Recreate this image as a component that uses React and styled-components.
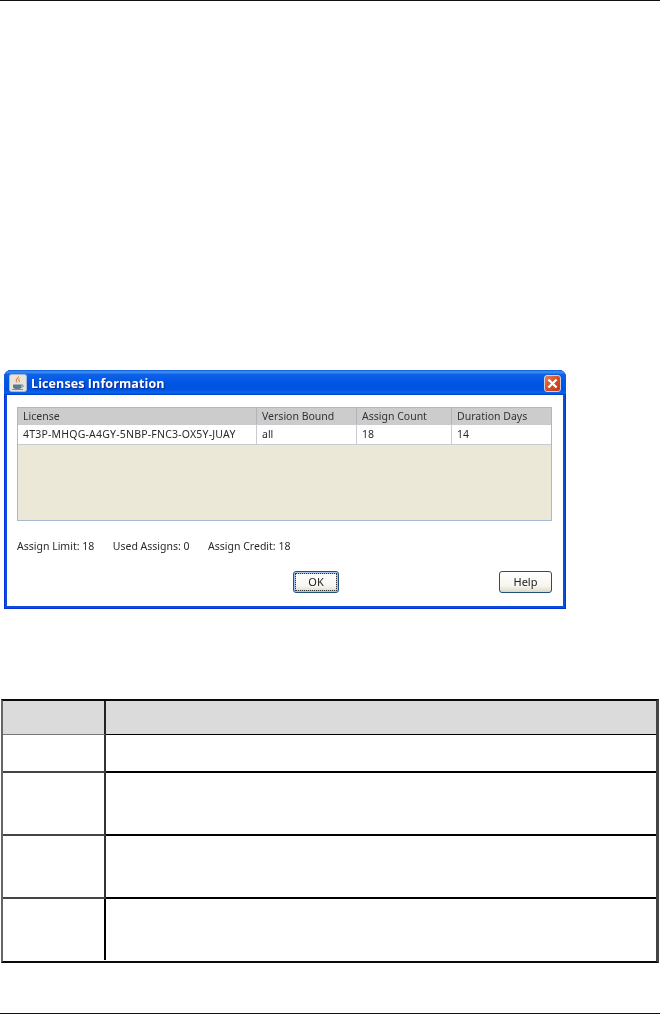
import React from "react";
import styled, { createGlobalStyle } from "styled-components";

const Global = createGlobalStyle`
  html, body { margin: 0; padding: 0; background: #fff; }
  body { font-family: "Noto Sans", "Liberation Sans", Arial, sans-serif; }
`;

const Page = styled.div`
  width: 660px;
  height: 1014px;
  display: flex;
  flex-direction: column;
  overflow: hidden;
  background: #fff;
`;
const Rule = styled.div`
  height: 1px;
  flex: none;
  background: #111;
  margin-top: ${(p) => p.$top || 0}px;
`;
const Dialog = styled.section`
  width: 562px;
  height: 239px;
  margin: 369px 0 0 4px;
  box-sizing: border-box;
  display: flex;
  flex-direction: column;
  border-radius: 7px 7px 0 0;
  overflow: hidden;
  background: #0a4fdc;
  box-shadow: inset 0 0 0 1px #0831d9;
  filter: blur(0.3px);
`;
const TitleBar = styled.header`
  height: 25px;
  flex: none;
  display: flex;
  align-items: center;
  box-sizing: border-box;
  padding: 1px 5px 0 5px;
  gap: 4px;
  background: linear-gradient(180deg, #0a5ade 0%, #3d93f5 8%, #0f62e6 18%, #0055e5 50%, #0053e0 78%, #0a64ee 90%, #0040c4 100%);
`;
const AppIcon = styled.svg`
  width: 18px;
  height: 18px;
  flex: none;
`;
const Title = styled.h1`
  margin: 0;
  flex: 1;
  font: bold 12.5px "Open Sans", "DejaVu Sans", sans-serif;
  letter-spacing: 0.1px;
  color: #fff;
  text-shadow: 1px 1px 1px #0a2a90;
`;
const CloseBtn = styled.svg`
  width: 17px;
  height: 17px;
  flex: none;
`;
const Client = styled.div`
  flex: 1;
  margin: 0 3px 3px 3px;
  background: #fff;
  display: flex;
  flex-direction: column;
  padding: 12px 11px 13px 10px;
  min-height: 0;
`;
const Panel = styled.div`
  height: 114px;
  flex: none;
  box-sizing: border-box;
  border: 1px solid #a6bbd0;
  background: #ebe8d8;
`;
const GridRow = styled.div`
  display: grid;
  grid-template-columns: 239px 100px 95px 1fr;
  height: ${(p) => p.$h}px;
  box-sizing: border-box;
  background: ${(p) => p.$bg};
  border-bottom: 1px solid #c8ccd0;
`;
const GridCell = styled.div`
  font: 10.5px/1 "Noto Sans", sans-serif;
  color: ${(p) => p.$color || "#2a2a2a"};
  letter-spacing: ${(p) => p.$track || 0}px;
  display: flex;
  align-items: center;
  padding-left: 5px;
  border-right: 1px solid ${(p) => p.$sep};
  white-space: nowrap;
  &:last-child { border-right: none; }
`;
const Stats = styled.div`
  display: flex;
  margin-top: 19px;
  height: 13px;
  align-items: center;
  gap: 18.5px;
  font: 10.5px/1 "Noto Sans", sans-serif;
  color: #2a2a2a;
  white-space: nowrap;
`;
const Actions = styled.div`
  margin-top: 19px;
  display: flex;
  padding-left: 276px;
`;
const Btn = styled.button`
  width: ${(p) => p.$w}px;
  height: 22px;
  box-sizing: border-box;
  padding: 0 0 2px;
  margin-left: ${(p) => p.$ml || 0}px;
  border: 1px solid #1f4f7d;
  border-radius: 3px;
  background: linear-gradient(180deg, #fff 0%, #f6f5ef 70%, #dcd8c8 100%);
  font: 11px "Noto Sans", sans-serif;
  color: #222;
  ${(p) => p.$focus && `
    box-shadow: inset 0 0 0 2px #a8c4ea;
    outline: 1px dotted #333;
    outline-offset: -3px;
  `}
`;
const DocTable = styled.div`
  margin: 90px 0 0 1px;
  width: 658px;
  box-sizing: border-box;
  border-top: 2px solid #0a0a0a;
  border-bottom: 2px solid #0a0a0a;
  border-left: 2px solid #666;
  border-right: 3px solid #444;
  display: grid;
  grid-template-columns: 103px 1fr;
`;
const DocHead = styled.div`
  height: 34px;
  box-sizing: border-box;
  background: #dbdbdb;
  border-bottom: 1px solid ${(p) => p.$line};
  ${(p) => p.$first && "border-right: 2px solid #222;"}
`;
const DocCell = styled.div`
  height: ${(p) => p.$h}px;
  box-sizing: border-box;
  background: #fff;
  border-bottom: ${(p) => (p.$last ? "none" : `2px solid ${p.$line}`)};
  ${(p) => p.$first && `border-right: 2px solid ${p.$last ? "#000" : "#333"};`}
  ${(p) => p.$first && p.$last && "height: 61px; margin-bottom: 1px;"}
`;

const JavaIcon = () => (
  <AppIcon viewBox="0 0 18 18">
    <rect x="0.5" y="0.5" width="17" height="17" rx="2" fill="#e8e4d8" stroke="#a9b8d8" />
    <path d="M9 1.500c2.500 2.500-2.500 3.500-1 6 .5 1 1 1.500 1 1.500-2-1-3-2.300-1.800-4C8.300 3.800 9.500 3.200 9 1.500z" fill="#e0701c" />
    <path d="M11.500 3.500c-2 1-2.500 2.300-1.800 3.500.3.6.5 1 .2 1.500 1.100-.8 1-1.700.5-2.400-.5-.9-.1-1.700 1.100-2.600z" fill="#e0701c" />
    <path d="M4 10.500h8.500v2.500c0 1.500-1.500 2-4.200 2S4 14.500 4 13z" fill="#5d7a90" />
    <path d="M12.500 11c2 -.5 2.500 1.800 .2 2.500" fill="none" stroke="#5d7a90" />
    <path d="M3 15.500h11" stroke="#8090a0" />
  </AppIcon>
);

const CloseIcon = () => (
  <CloseBtn viewBox="0 0 17 17">
    <defs>
      <linearGradient id="cl" x1="0" y1="0" x2="1" y2="1">
        <stop offset="0" stopColor="#e8825f" />
        <stop offset="0.5" stopColor="#d84f22" />
        <stop offset="1" stopColor="#b83a18" />
      </linearGradient>
    </defs>
    <rect x="0.5" y="0.5" width="16" height="16" rx="2.500" fill="url(#cl)" stroke="#e8eefa" strokeOpacity="0.8" />
    <path d="M5.200 5.200l6.600 6.600M11.800 5.200l-6.600 6.600" stroke="#fff" strokeWidth="2.200" strokeLinecap="square" />
  </CloseBtn>
);

const headers = ["License", "Version Bound", "Assign Count", "Duration Days"];
const values = [
  { text: "4T3P-MHQG-A4GY-5NBP-FNC3-OX5Y-JUAY", track: 0.2 },
  { text: "all" },
  { text: "18" },
  { text: "14" },
];
const docRows = [
  { h: 38 },
  { h: 63 },
  { h: 63 },
  { h: 62, last: true },
];

export default function App() {
  return (
    <Page>
      <Global />
      <Rule />
      <Dialog>
        <TitleBar>
          <JavaIcon />
          <Title>Licenses Information</Title>
          <CloseIcon />
        </TitleBar>
        <Client>
          <Panel>
            <GridRow $h={17} $bg="#cccccc">
              {headers.map((t) => (
                <GridCell key={t} $sep="#b4b4b4" $color="#333">{t}</GridCell>
              ))}
            </GridRow>
            <GridRow $h={20} $bg="#ffffff">
              {values.map((v) => (
                <GridCell key={v.text} $sep="#c8ccd0" $track={v.track}>{v.text}</GridCell>
              ))}
            </GridRow>
          </Panel>
          <Stats>
            <span>Assign Limit: 18</span>
            <span>Used Assigns: 0</span>
            <span>Assign Credit: 18</span>
          </Stats>
          <Actions>
            <Btn $w={46} $focus>OK</Btn>
            <Btn $w={53} $ml={160}>Help</Btn>
          </Actions>
        </Client>
      </Dialog>
      <DocTable>
        <DocHead $first $line="#777" />
        <DocHead $line="#000" />
        {docRows.map((r, i) => (
          <React.Fragment key={i}>
            <DocCell $first $h={r.h} $last={r.last} $line="#444" />
            <DocCell $h={r.h} $last={r.last} $line="#000" />
          </React.Fragment>
        ))}
      </DocTable>
      <Rule $top={50} />
    </Page>
  );
}
